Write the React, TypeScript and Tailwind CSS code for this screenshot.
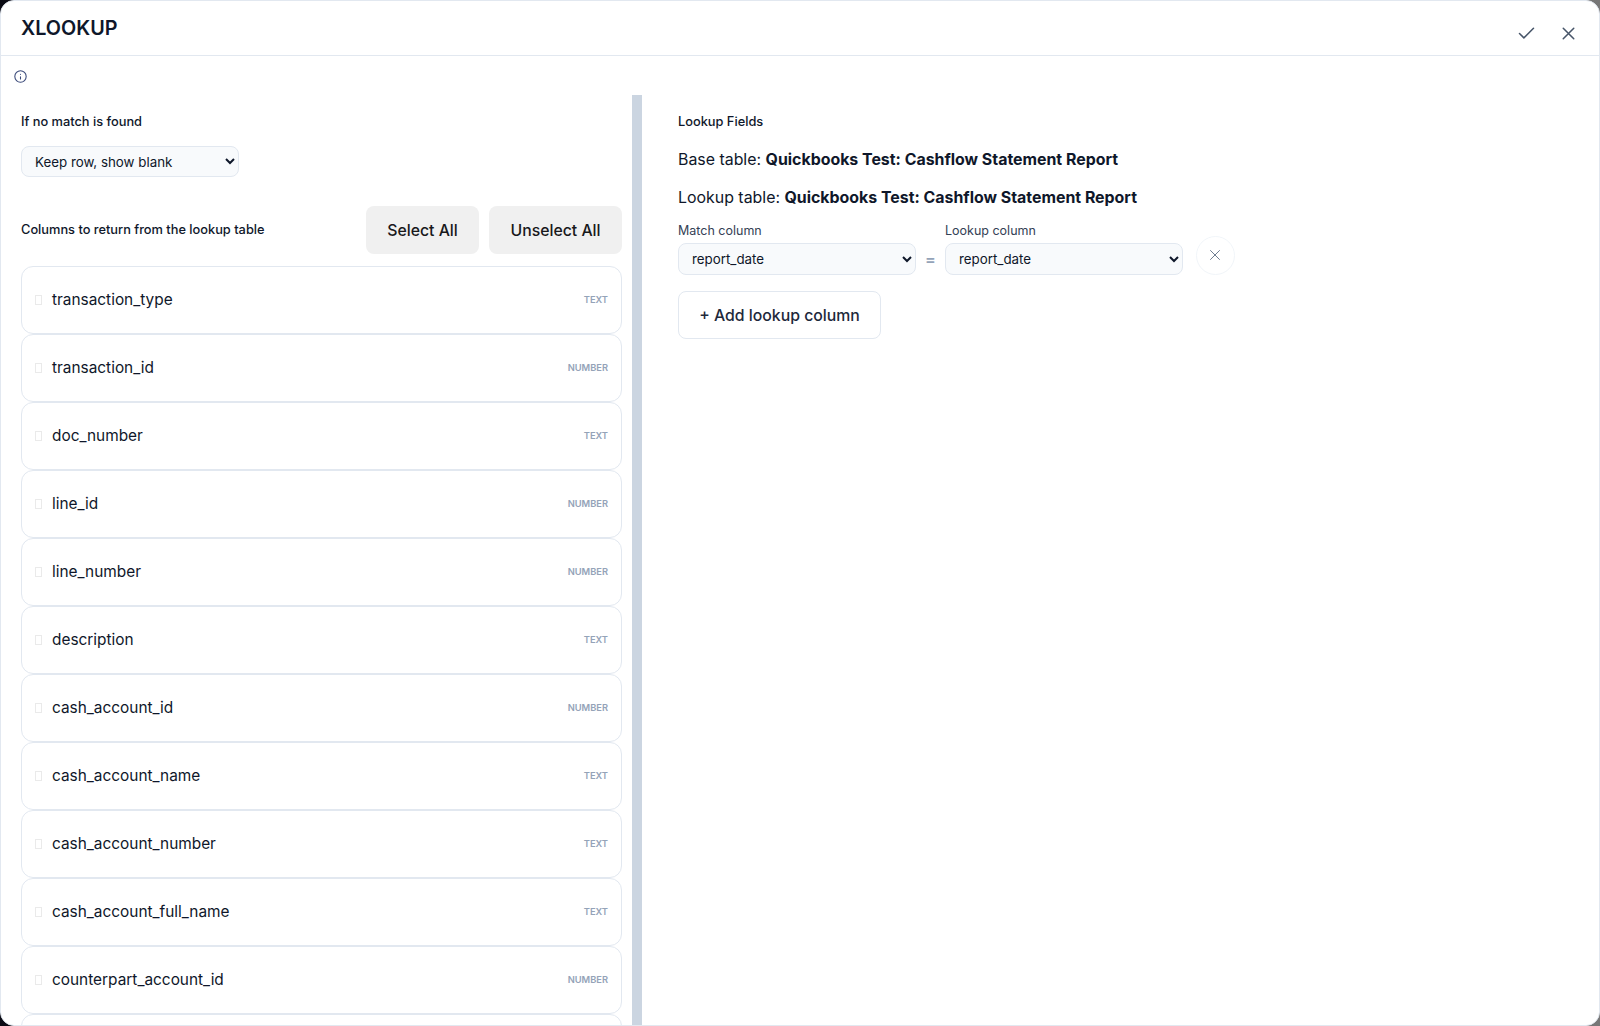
const rows: [string, string][] = [
  ["transaction_type", "TEXT"],
  ["transaction_id", "NUMBER"],
  ["doc_number", "TEXT"],
  ["line_id", "NUMBER"],
  ["line_number", "NUMBER"],
  ["description", "TEXT"],
  ["cash_account_id", "NUMBER"],
  ["cash_account_name", "TEXT"],
  ["cash_account_number", "TEXT"],
  ["cash_account_full_name", "TEXT"],
  ["counterpart_account_id", "NUMBER"],
  ["counterpart_account_name", "TEXT"],
];

function Select({ value, size }: { value: string; size: string }) {
  return (
    <select
      defaultValue={value}
      className={`${size} rounded-lg border border-[#e2e8f0] bg-[#f8fafc] pl-[9px] pr-1 text-[13.33px] text-[#0f172a]`}
    >
      <option>{value}</option>
    </select>
  );
}

export default function App() {
  return (
    <div className="h-[1026px] w-[1600px] overflow-hidden bg-gradient-to-r from-[#0b0b14] to-[#777777] font-['Inter',sans-serif] text-[#0f172a]">
      <div className="flex h-full w-full flex-col overflow-hidden rounded-[14px] border border-[#e2e8f0] bg-white">
        <header className="flex h-[55px] shrink-0 items-start justify-between border-b border-[#e2e8f0] pl-5 pr-[20px]">
          <h1 className="mt-[12px] text-[19.8px] font-semibold leading-[30px]">XLOOKUP</h1>
          <div className="mt-[22px] flex items-center gap-[21px] text-[#475569]">
            <svg width="21" height="21" viewBox="0 0 24 24" fill="none" stroke="currentColor" strokeWidth="1.75" strokeLinecap="round" strokeLinejoin="round"><path d="M20 6 9 17l-5-5" /></svg>
            <svg width="21" height="21" viewBox="0 0 24 24" fill="none" stroke="currentColor" strokeWidth="1.75" strokeLinecap="round" strokeLinejoin="round"><path d="M18 6 6 18M6 6l12 12" /></svg>
          </div>
        </header>
        <div className="flex h-[39px] shrink-0 items-center pl-[13px] pt-[1px] text-[#3b4a7a]">
          <svg width="13" height="13" viewBox="0 0 24 24" fill="none" stroke="currentColor" strokeWidth="2" strokeLinecap="round"><circle cx="12" cy="12" r="10.5" /><path d="M12 16.5v-4M12 8h.01" /></svg>
        </div>
        <div className="flex min-h-0 flex-1">
          <section className="flex w-[631px] shrink-0 flex-col overflow-hidden pl-5 pr-[10px]">
            <label className="mt-[18px] text-[12.8px] font-medium leading-[18px]">If no match is found</label>
            <div className="mt-[15px]">
              <Select value="Keep row, show blank" size="h-[31px] w-[218px]" />
            </div>
            <div className="mt-[29px] flex items-center justify-between">
              <span className="text-[12.8px] font-medium">Columns to return from the lookup table</span>
              <div className="flex gap-[10px]">
                <button className="h-[48px] w-[113px] rounded-lg bg-[#f0f0f0] pt-[1px] text-[15.8px] font-medium text-[#18181b]">Select All</button>
                <button className="h-[48px] w-[133px] rounded-lg bg-[#f0f0f0] pt-[1px] text-[15.8px] font-medium text-[#18181b]">Unselect All</button>
              </div>
            </div>
            <div className="mt-3 flex flex-col">
              {rows.map(([name, type]) => (
                <div key={name} className="flex h-[68px] shrink-0 items-center rounded-xl border border-[#e2e8f0] pl-[13px] pr-[13px]">
                  <span className="h-[10px] w-[7px] border border-[#eaeaea]" />
                  <span className="ml-[10px] flex-1 text-[15.4px]">{name}</span>
                  <span className="text-[9.3px] font-semibold text-[#94a3b8]">{type}</span>
                </div>
              ))}
            </div>
          </section>
          <div className="w-[10px] shrink-0 bg-[#cbd5e1]" />
          <section className="flex-1 pl-9">
            <div className="mt-[18px] text-[12.8px] font-medium leading-[18px]">Lookup Fields</div>
            <p className="mt-[17px] text-[15.9px] leading-6">Base table: <b className="font-bold">Quickbooks Test: Cashflow Statement Report</b></p>
            <p className="mt-[14px] text-[15.9px] leading-6">Lookup table: <b className="font-bold">Quickbooks Test: Cashflow Statement Report</b></p>
            <div className="mt-[12px] flex items-end">
              <div className="flex flex-col">
                <span className="mb-[3px] text-[12.5px] leading-[18px] text-[#334155]">Match column</span>
                <Select value="report_date" size="h-[32px] w-[238px]" />
              </div>
              <span className="flex h-[32px] w-[29px] items-center justify-center text-base font-semibold text-[#94a3b8]">=</span>
              <div className="flex flex-col">
                <span className="mb-[3px] text-[12.5px] leading-[18px] text-[#334155]">Lookup column</span>
                <Select value="report_date" size="h-[32px] w-[238px]" />
              </div>
              <button className="ml-[13px] flex h-[39px] w-[39px] items-center justify-center rounded-full border border-[#f1f5f9] pb-[1px] pr-[2px] text-[#64748b]">
                <svg width="18" height="18" viewBox="0 0 24 24" fill="none" stroke="currentColor" strokeWidth="1.25" strokeLinecap="round"><path d="M18 6 6 18M6 6l12 12" /></svg>
              </button>
            </div>
            <button className="mt-[16px] h-[48px] w-[203px] rounded-lg border border-[#e2e8f0] bg-white pt-[1px] text-[15.8px] font-medium text-[#1e293b]">+ Add lookup column</button>
          </section>
        </div>
      </div>
    </div>
  );
}
